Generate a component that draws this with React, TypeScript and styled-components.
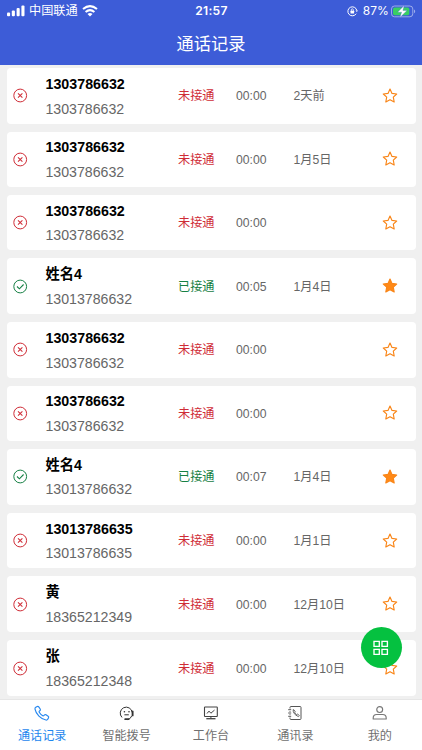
import React from "react";
import styled, { createGlobalStyle } from "styled-components";

const GlobalStyle = createGlobalStyle`
  * { box-sizing: border-box; }
  html, body { margin: 0; padding: 0; overflow: hidden; }
  body { font-family: "Liberation Sans", "Noto Sans CJK SC", sans-serif; background: #f0f0f0; }
  svg { display: block; flex: none; }
`;

const Screen = styled.div`
  position: relative;
  display: flex;
  flex-direction: column;
  width: 422px;
  height: 750px;
  overflow: hidden;
  background: #f0f0f0;
`;

const Header = styled.header`
  flex: none;
  height: 65.3px;
  background: #3d5cd7;
  color: #fff;
`;

const StatusBar = styled.div`
  display: grid;
  grid-template-columns: 1fr auto 1fr;
  align-items: center;
  height: 22px;
  padding: 0 6px 0 7px;
  font-family: Inter, "Noto Sans CJK SC", sans-serif;
  font-size: 12px;
  line-height: 22px;
`;

const Carrier = styled.div`
  display: flex;
  align-items: center;
  gap: 4px;
  font-size: 12.2px;
`;

const Clock = styled.div`
  font-size: 12.1px;
  font-weight: 600;
  letter-spacing: 0.3px;
`;

const Battery = styled.div`
  display: flex;
  align-items: center;
  justify-content: flex-end;
  gap: 2px;
  span { margin-left: 3px; font-size: 12px; letter-spacing: 0.1px; }
`;

const Title = styled.h1`
  margin: 0;
  height: 43px;
  line-height: 44px;
  text-align: center;
  font-size: 17.2px;
  font-weight: 400;
`;

const List = styled.main`
  flex: 1;
  min-height: 0;
  display: flex;
  flex-direction: column;
  gap: 8.1px;
  padding: 3.1px 6.5px 0;
  overflow: hidden;
`;

const Card = styled.article<{ $tall: boolean }>`
  flex: none;
  display: grid;
  grid-template-columns: 33px 132.5px 58px 57.5px 1fr 34px;
  align-items: center;
  height: ${(p) => (p.$tall ? 56 : 55.2)}px;
  padding-left: 6px;
  border-radius: 4px;
  background: #fff;
`;

const Contact = styled.div`
  display: flex;
  flex-direction: column;
  padding-top: 1.2px;
  white-space: nowrap;
`;

const Name = styled.strong`
  height: 24.5px;
  line-height: 24.5px;
  font-size: 14.25px;
  color: #000;
`;

const Phone = styled.span`
  height: 24.5px;
  line-height: 24.5px;
  font-size: 14.15px;
  color: #666;
`;

const Status = styled.span<{ $ok: boolean }>`
  padding-top: 1px;
  font-size: 12.2px;
  line-height: 18px;
  color: ${(p) => (p.$ok ? "#168044" : "#cf2c36")};
`;

const Detail = styled.span`
  padding-top: 1px;
  font-size: 12.2px;
  line-height: 18px;
  white-space: nowrap;
  color: #666;
`;

const TabBar = styled.nav`
  flex: none;
  display: grid;
  grid-template-columns: repeat(5, 1fr);
  height: 51.5px;
  border-top: 1px solid #e6e6e6;
  background: #fff;
`;

const Tab = styled.div<{ $active?: boolean }>`
  display: flex;
  flex-direction: column;
  align-items: center;
  padding-top: 5.5px;
  gap: 4.5px;
  font-size: 12.1px;
  line-height: 18px;
  color: ${(p) => (p.$active ? "#1e87ee" : "#707070")};
`;

const Fab = styled.button`
  position: absolute;
  right: 20.5px;
  bottom: 82px;
  display: flex;
  align-items: center;
  justify-content: center;
  width: 41px;
  height: 41px;
  padding: 0;
  border: 0;
  border-radius: 50%;
  background: #05c140;
`;

const Signal = () => (
  <svg width="18" height="12" viewBox="0 0 18 12" fill="#fff">
    <rect x="0" y="7.5" width="3.1" height="3.7" rx="1" />
    <rect x="4.8" y="5.6" width="3.1" height="5.6" rx="1" />
    <rect x="9.6" y="3.1" width="3.1" height="8.1" rx="1" />
    <rect x="14.4" y="0.4" width="3.1" height="10.8" rx="1" />
  </svg>
);

const Wifi = () => (
  <svg width="16" height="12" viewBox="0 0 16 12" fill="none" stroke="#fff" strokeWidth="2">
    <path d="M1 4.1Q8-1.8 15 4.1M3.6 7Q8 3.3 12.4 7" />
    <path d="M5.5 8.9Q8 6.9 10.5 8.9L8 11.5Z" fill="#fff" stroke="none" />
  </svg>
);

const RotationLock = () => (
  <svg width="11" height="11" viewBox="0 0 11 11" fill="none" stroke="#fff" strokeWidth="1">
    <path d="M9.2 7.7A4.5 4.5 0 1 1 9.8 4.5" />
    <path d="m8.5 4.4 1.3 1.7L11 4.4Z" fill="#fff" stroke="none" />
    <path d="M4.3 5V3.8a1 1 0 0 1 2 0V5" strokeWidth=".8" />
    <rect x="3.5" y="4.8" width="3.6" height="2.8" rx=".4" fill="#fff" stroke="none" />
  </svg>
);

const BatteryIcon = () => (
  <svg width="25" height="13" viewBox="0 0 25 13">
    <rect x=".5" y="1" width="21.3" height="10.8" rx="3" fill="none" stroke="#fff" strokeOpacity=".48" />
    <rect x="2" y="2.5" width="16.3" height="7.8" rx="1.7" fill="#39cf63" />
    <path d="M23 4.6v3.7c1.6-.7 1.6-3 0-3.7Z" fill="#fff" fillOpacity=".5" />
    <path d="M13.2.5 6.6 7.2h4L8.9 12.4l7.2-7h-4.2Z" fill="#fff" stroke="#3d5cd7" strokeWidth=".3" />
  </svg>
);

const CallState = ({ ok }: { ok: boolean }) => (
  <svg width="15" height="15" viewBox="0 0 15 15" fill="none" stroke={ok ? "#168044" : "#cf2c36"}>
    <circle cx="7.2" cy="7.5" r="6.4" strokeWidth="1" />
    {ok ? <path d="m4 7.5 2.4 2.3 4.2-4.3" strokeWidth="1.1" /> : <path d="m5 5.3 4.4 4.4m0-4.4L5 9.7" strokeWidth="1.05" />}
  </svg>
);

const Star = ({ filled }: { filled: boolean }) => (
  <svg width="16" height="16" viewBox="0 0 16 16" fill={filled ? "#ff8917" : "none"} stroke="#f98517" strokeWidth="1.15" strokeLinejoin="round">
    <path d="m8 1.1 2 4.3 4.7.6-3.4 3.2.9 4.8L8 11.7 3.8 14l.9-4.8L1.3 6l4.7-.6Z" />
  </svg>
);

const PhoneIcon = () => (
  <svg width="16" height="17" viewBox="0 0 24 25.5" fill="none" stroke="#2688f0" strokeWidth="1.75" strokeLinejoin="round">
    <path d="M13.2 16.2q.8.5 1.5-.2l1.1-1.1q1-1 2.2-.2l3.2 2.2q1.3.9.6 2.2l-1.2 2.2q-.9 1.6-2.7 1.2Q12.2 21.400 7.400 16.600 2.600 11.800 1.500 6.100 1.100 4.300 2.700 3.400L4.900 2.200Q6.200 1.500 7.100 2.800L9.300 6q.8 1.200-.2 2.200L8 9.300q-.7.7-.2 1.500Q9.900 14.100 13.200 16.200Z" />
  </svg>
);

const HeadsetIcon = () => (
  <svg width="16" height="17" viewBox="0 0 16 17" fill="none" stroke="#333">
    <path d="M3 12.4A6 6 0 1 1 13.2 7.5M12.8 10.8Q11.3 14.4 8.5 14.6" strokeWidth="1" />
    <path d="M13.6 6.4v4" strokeWidth="1.9" strokeLinecap="round" />
    <path d="M5.4 9.8h4.4" strokeWidth="1" />
    <circle cx="5.4" cy="6.7" r=".8" fill="#333" stroke="none" />
    <circle cx="10" cy="6.7" r=".8" fill="#333" stroke="none" />
    <path d="M6.2 14.2h3.3" strokeWidth="1.8" strokeLinecap="round" />
  </svg>
);

const MonitorIcon = () => (
  <svg width="16" height="17" viewBox="0 0 16 17" fill="none" stroke="#444">
    <rect x="1.5" y="2" width="12.8" height="9.5" rx=".6" strokeWidth="1.1" />
    <path d="m4 8.5 2-2.4 1.9 2.1 3.6-3.1M7.9 11.5v2" strokeWidth="1" />
    <path d="M3.3 13.7h9.2" strokeWidth="1.3" />
  </svg>
);

const BookIcon = () => (
  <svg width="16" height="17" viewBox="0 0 16 17" fill="none" stroke="#555" strokeWidth="1">
    <path d="M3 3.5V2.4q0-.9.9-.9h9.2q.9 0 .9.9v11.2q0 .9-.9.9H3.9q-.9 0-.9-.9v-1.1M3 6v.8m0 2.4v.9M1.2 4.7h3M1.2 8h3M1.2 11.3h3" />
    <path d="M6.2 4.6q-.5 4.4 5.2 7l1-1-1.8-1.5-1 .7-2-2 .7-.9-1.1-1.8Z" strokeWidth=".9" />
  </svg>
);

const PersonIcon = () => (
  <svg width="16" height="17" viewBox="0 0 16 17" fill="none" stroke="#777" strokeWidth="1.15">
    <circle cx="7.7" cy="4.5" r="2.95" />
    <path d="M1.2 14v-1q0-3.5 3.5-3.5h6q3.5 0 3.5 3.5v1Z" strokeLinejoin="round" />
  </svg>
);

const GridIcon = () => (
  <svg width="16" height="16" viewBox="0 0 16 16" fill="none" stroke="#fff" strokeWidth="1.35">
    <path d="M1 1.3h5.3v5H1Zm8 0h5.4v5H9Zm-8 8h5.3v5.1H1Zm8 0h5.4v5.1H9Z" />
  </svg>
);

interface Call {
  name: string;
  phone: string;
  ok?: boolean;
  time?: string;
  date?: string;
}

const calls: Call[] = [
  { name: "1303786632", phone: "1303786632", date: "2天前" },
  { name: "1303786632", phone: "1303786632", date: "1月5日" },
  { name: "1303786632", phone: "1303786632" },
  { name: "姓名4", phone: "13013786632", ok: true, time: "00:05", date: "1月4日" },
  { name: "1303786632", phone: "1303786632" },
  { name: "1303786632", phone: "1303786632" },
  { name: "姓名4", phone: "13013786632", ok: true, time: "00:07", date: "1月4日" },
  { name: "13013786635", phone: "13013786635", date: "1月1日" },
  { name: "黄", phone: "18365212349", date: "12月10日" },
  { name: "张", phone: "18365212348", date: "12月10日" },
];

const tabs = [
  { label: "通话记录", icon: <PhoneIcon /> },
  { label: "智能拨号", icon: <HeadsetIcon /> },
  { label: "工作台", icon: <MonitorIcon /> },
  { label: "通讯录", icon: <BookIcon /> },
  { label: "我的", icon: <PersonIcon /> },
];

export default function App() {
  return (
    <>
      <GlobalStyle />
      <Screen>
        <Header>
          <StatusBar>
            <Carrier>
              <Signal />
              中国联通
              <Wifi />
            </Carrier>
            <Clock>21:57</Clock>
            <Battery>
              <RotationLock />
              <span>87%</span>
              <BatteryIcon />
            </Battery>
          </StatusBar>
          <Title>通话记录</Title>
        </Header>
        <List>
          {calls.map((call, i) => (
            <Card key={i} $tall={!/^\d/.test(call.name)}>
              <CallState ok={!!call.ok} />
              <Contact>
                <Name>{call.name}</Name>
                <Phone>{call.phone}</Phone>
              </Contact>
              <Status $ok={!!call.ok}>{call.ok ? "已接通" : "未接通"}</Status>
              <Detail>{call.time ?? "00:00"}</Detail>
              <Detail>{call.date}</Detail>
              <Star filled={!!call.ok} />
            </Card>
          ))}
        </List>
        <TabBar>
          {tabs.map((tab, i) => (
            <Tab key={tab.label} $active={i === 0}>
              {tab.icon}
              <span>{tab.label}</span>
            </Tab>
          ))}
        </TabBar>
        <Fab aria-label="拨号盘">
          <GridIcon />
        </Fab>
      </Screen>
    </>
  );
}
